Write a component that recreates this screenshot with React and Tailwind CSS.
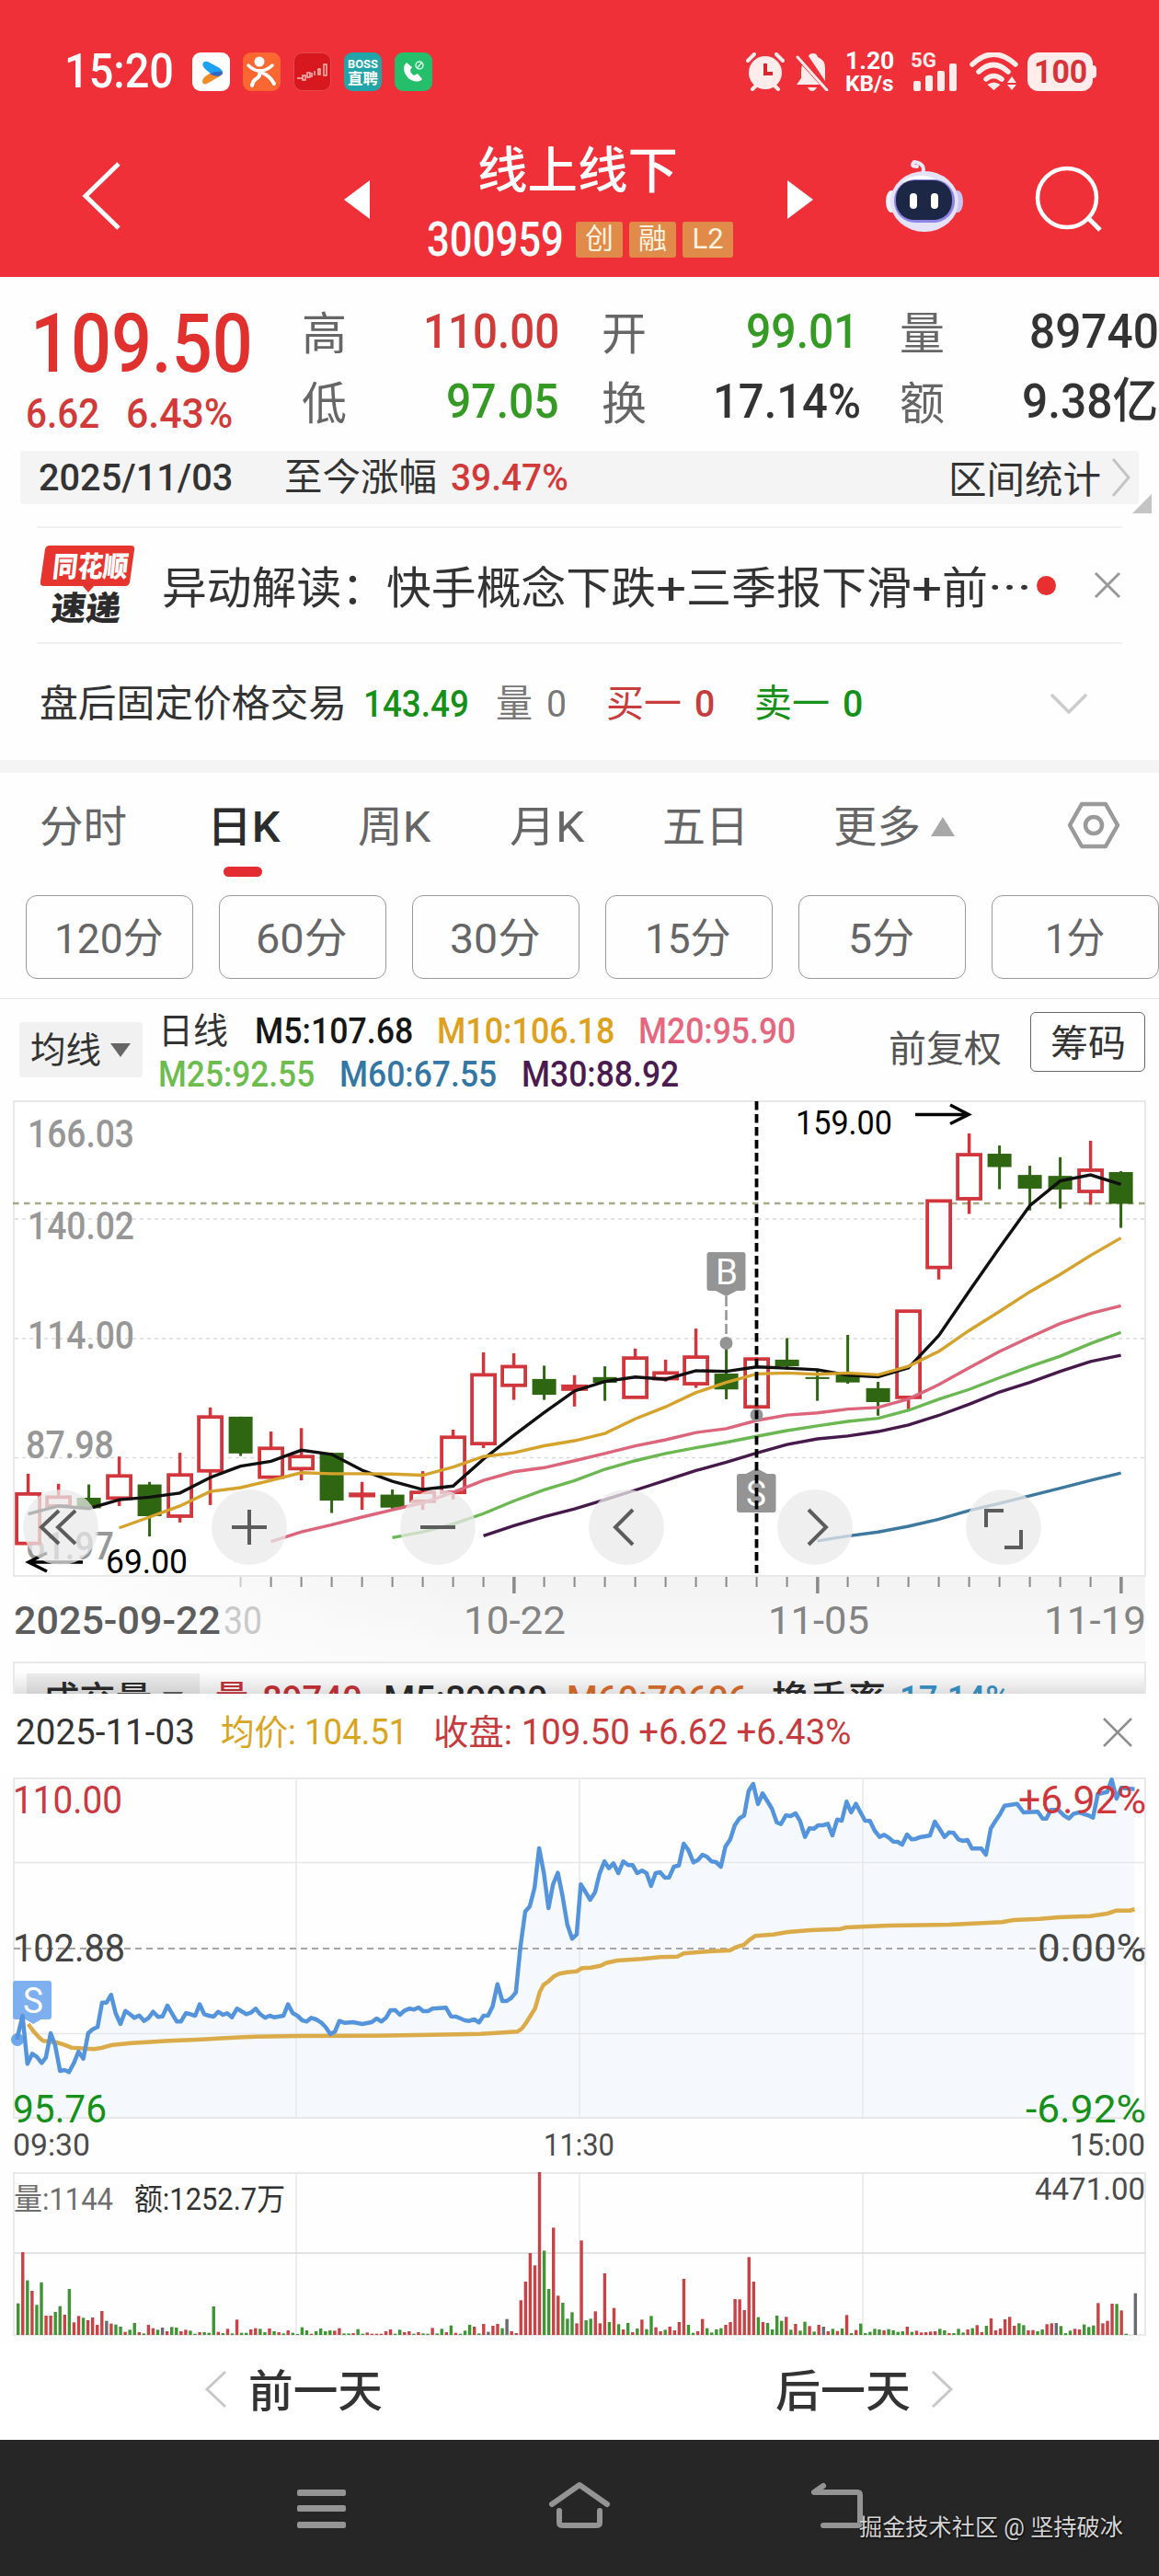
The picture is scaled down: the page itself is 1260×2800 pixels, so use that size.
import { useLayoutEffect, useRef } from 'react';

// Condenses or widens a line of text so that it fills its box exactly
function Fit({ className, children }) {
  const box = useRef(null);
  const ink = useRef(null);

  useLayoutEffect(() => {
    const ratio = box.current.clientWidth / ink.current.offsetWidth;
    ink.current.style.transform = `scaleX(${ratio})`;
  }, [children]);

  return (
    <span ref={box} className={`block shrink-0 leading-none ${className}`}>
      <span ref={ink} className="block w-max origin-left whitespace-pre">{children}</span>
    </span>
  );
}

// Text inside a chart, stretched to the given width
function Label({ x, y, w, size, fill, weight = 400, children }) {
  return (
    <text
      x={x}
      y={y + size * 0.355}
      fontSize={size}
      fill={fill}
      fontWeight={weight}
      textLength={w}
      lengthAdjust="spacingAndGlyphs"
    >
      {children}
    </text>
  );
}

/* ---------- daily K data, in chart units ---------- */

const UNIT = 2.904;
const kx = (i) => 30.6 + 33 * i;
const ky = (v) => v / UNIT;

// [up/down, high, body top, body bottom, low]
const candles = [
  ['r', 1196, 1260, 1416, 1418], ['r', 1228, 1270, 1298, 1300], ['g', 1230, 1272, 1305, 1305],
  ['r', 1142, 1203, 1273, 1298], ['g', 1222, 1230, 1330, 1394], ['r', 1130, 1200, 1330, 1350],
  ['r', 987, 1017, 1187, 1295], ['g', 1016, 1016, 1132, 1140], ['r', 1063, 1116, 1207, 1207],
  ['r', 1052, 1142, 1180, 1217], ['g', 1130, 1130, 1281, 1320], ['r', 1222, 1261, 1265, 1310],
  ['g', 1246, 1262, 1303, 1308], ['r', 1188, 1255, 1283, 1310], ['r', 1057, 1081, 1255, 1277],
  ['r', 813, 884, 1101, 1115], ['r', 816, 858, 917, 963], ['g', 855, 897, 947, 963],
  ['r', 885, 920, 929, 984], ['g', 857, 891, 909, 966], ['r', 801, 831, 955, 955],
  ['r', 836, 878, 896, 905], ['r', 738, 828, 912, 925], ['g', 785, 880, 930, 961],
  ['r', 828, 834, 985, 985], ['g', 768, 836, 857, 868], ['g', 865, 891, 897, 966],
  ['g', 758, 880, 908, 912], ['g', 906, 926, 970, 1013], ['r', 680, 683, 955, 995],
  ['r', 332, 335, 545, 583], ['r', 122, 189, 328, 376], ['g', 160, 186, 228, 298],
  ['g', 224, 253, 296, 365], ['g', 197, 256, 299, 359], ['r', 145, 238, 305, 347],
  ['g', 241, 244, 344, 420],
];

const averages = [
  { color: '#3d789f', start: 26, values: [1408, 1393, 1380, 1362, 1340, 1312, 1290, 1266, 1242, 1217, 1194] },
  { color: '#451a4a', start: 15, values: [1392, 1360, 1332, 1307, 1278, 1248, 1217, 1186, 1160, 1131, 1104, 1086, 1077, 1063, 1042, 1012, 977, 938, 908, 873, 842, 822] },
  { color: '#6bb751', start: 12, values: [1398, 1380, 1355, 1322, 1282, 1247, 1218, 1182, 1155, 1132, 1114, 1097, 1078, 1060, 1045, 1031, 1021, 996, 961, 930, 893, 858, 825, 785, 750] },
  { color: '#dc647b', start: 8, values: [1410, 1380, 1357, 1333, 1310, 1288, 1255, 1217, 1190, 1177, 1155, 1132, 1108, 1089, 1066, 1054, 1028, 1011, 1004, 992, 987, 960, 915, 862, 810, 765, 722, 690, 666] },
  { color: '#101010', start: 0, values: [1323, 1298, 1306, 1278, 1270, 1257, 1208, 1172, 1157, 1122, 1135, 1185, 1220, 1246, 1235, 1150, 1075, 1003, 935, 905, 891, 898, 871, 873, 859, 863, 868, 885, 890, 862, 760, 620, 483, 350, 272, 253, 283] },
  { color: '#d5a22b', start: 3, values: [1367, 1333, 1298, 1252, 1240, 1217, 1193, 1196, 1196, 1197, 1201, 1175, 1142, 1130, 1108, 1092, 1069, 1023, 985, 940, 908, 881, 878, 882, 878, 884, 857, 810, 744, 684, 622, 567, 507, 452] },
];

/* ---------- intraday data ---------- */

const price = `45,920 60,843 73,1000 86,967 98,977 111,997 122,980 135,900 147,940 160,1023 172,1020 184,1027
197,997 209,960 222,983 235,900 247,887 260,880 272,800 284,800 296,775 308,835 321,870 334,827 346,838
358,850 371,842 384,860 396,850 408,830 421,847 433,845 446,810 458,835 471,862 482,862 495,835 507,838
520,843 532,806 544,838 557,843 569,846 581,830 594,840 605,835 618,848 631,820 643,828 656,838 668,833
681,820 693,838 706,850 718,843 730,848 755,843 767,806 780,835 792,843 805,858 817,862 829,850 842,855
855,865 867,880 880,903 892,895 904,860 917,866 940,864 965,870 990,864 1003,852 1016,862 1028,850
1040,825 1053,825 1065,840 1078,826 1090,820 1103,823 1115,816 1127,828 1140,828 1152,820 1188,817
1201,845 1215,846 1238,858 1250,860 1263,855 1276,865 1288,843 1300,842 1312,813 1325,740 1338,795
1350,795 1362,785 1374,767 1386,620 1399,503 1411,487 1424,425 1436,297 1449,380 1461,492 1473,415
1486,377 1498,450 1511,545 1524,592 1536,578 1547,415 1560,440 1572,465 1585,440 1597,380 1610,340
1622,362 1634,346 1647,378 1660,340 1673,352 1685,352 1697,378 1710,370 1722,378 1734,420 1746,378
1758,375 1771,393 1782,392 1795,357 1808,353 1821,282 1833,302 1847,343 1859,335 1871,318 1883,325
1895,340 1907,342 1920,357 1932,292 1945,268 1957,222 1969,200 1982,190 1994,110 2006,87 2019,153
2031,118 2043,142 2056,168 2069,213 2080,218 2093,190 2106,192 2119,183 2131,208 2144,260 2156,232
2168,233 2179,222 2192,222 2205,217 2217,255 2230,203 2242,207 2255,145 2267,180 2280,152 2292,180
2304,207 2317,208 2330,240 2343,260 2355,253 2367,262 2379,275 2391,276 2403,285 2416,252 2428,268
2440,266 2453,260 2465,258 2477,255 2490,210 2503,235 2516,260 2528,245 2540,247 2553,268 2565,273
2577,270 2589,298 2614,298 2626,318 2639,233 2652,207 2664,185 2676,158 2709,152 2726,180 2764,178
2777,200 2787,200 2799,172 2819,172 2834,190 2847,200 2859,185 2874,180 2899,190 2911,197 2924,120
2949,113 2961,73 2974,135 2986,100 3022,104`;

const avgPrice = `75,870 90,895 105,915 115,925 150,930 172,938 190,947 250,952 270,948 300,938 350,932 450,925
540,920 600,916 680,911 800,909 1000,908 1150,905 1280,902 1350,897 1378,895 1390,885 1402,865 1425,820
1438,765 1448,742 1460,732 1475,715 1490,706 1510,701 1536,698 1550,688 1574,686 1599,680 1614,671
1644,663 1709,658 1759,652 1804,650 1821,640 1889,633 1944,630 1959,620 1981,612 1997,595 2011,583
2059,578 2099,570 2159,564 2239,560 2254,555 2309,552 2369,549 2529,546 2669,538 2699,531 2769,527
2819,522 2904,518 2949,510 2974,500 3009,500 3022,496`;

const volumes = `g103 r270 g178 r144 g98 g171 r63 r63 g75 g94 r66 g150 r41 r62 g56 r48 r57 r33 r78 k46 r37 g34
g27 r10 g17 g39 r9 g5 r33 r22 g17 k24 r12 g26 g24 r12 r17 g14 g4 r9 g9 g7 g93 r10 g6 r20 g5 r50 g7 g7 r18
r22 g20 g9 r21 g12 r9 g5 r15 g7 g3 g25 g15 r4 g12 g21 g12 g15 r14 r22 g5 g5 r6 g19 g4 r8 r4 r4 r4 r12 r18
g4 g17 r9 r12 g4 r9 g5 g4 r23 g5 g20 r9 g31 r7 g4 g14 g33 r27 g5 r36 k10 r30 r36 g22 k52 r12 r6 r113 r174
r267 r227 r531 g275 g150 r350 r128 g105 g53 g74 r38 r308 g48 g53 r77 r38 r201 g42 r88 g35 r18 g39 r9 g21
r50 g19 g62 r25 r12 g17 r27 r15 r42 r183 g33 g7 r12 r52 g22 g8 g18 g22 r33 r42 r117 r116 r81 r254 r174 g58
r42 g39 g18 g63 g46 r59 g17 r36 g14 g43 r29 g11 r33 k27 r12 g20 r13 g21 r65 g6 r16 g37 g6 g10 g20 g18 r15
g19 g15 g10 g12 r27 g10 r14 r8 r9 r11 r12 g20 g15 r6 g6 g20 g8 r18 g22 r32 r9 g30 r54 r15 r21 r51 r59 r30
g38 g32 r15 r16 g12 g18 r35 r38 k39 g29 g6 g14 r20 r18 g34 g26 g31 r104 r38 r46 r102 g101 r80 g4 k0 k136`.split(/\s+/);

const barColors = { r: '#c74347', g: '#3f9434', k: '#6b6b70' };

const toPoints = (data) =>
  data
    .split(/\s+/)
    .map((pair) => {
      const [x, y] = pair.split(',').map(Number);
      return `${(x / 2.45).toFixed(1)},${(y / 3 - 15).toFixed(1)}`;
    })
    .join(' ');

const periods = [
  { label: '120分', cls: 'w-[119px]' },
  { label: '60分', cls: 'w-[100px]' },
  { label: '30分', cls: 'w-[99px]' },
  { label: '15分', cls: 'w-[94px]' },
  { label: '5分', cls: 'w-[72px]' },
  { label: '1分', cls: 'w-[65px]' },
];

function StatusBar() {
  return (
    <div className="flex h-[156px] items-center pl-[70px] text-white">
      <Fit className="w-[119px] text-[52px] font-medium">15:20</Fit>
      <div className="ml-5 flex gap-[14px]">
        <svg width="41" height="42" viewBox="0 0 41 42">
          <rect width="41" height="42" rx="9" fill="#fff" />
          <path d="M12 11q2-2 5-1l11 6q6 3 5 8-8 3-13-1l-6-5q-4-4-2-7z" fill="#1ea1f5" />
          <path d="M33 21q0 4-5 6l-12 7q-5 2-5-3 1-5 8-8 7-1 14-2z" fill="#f58b2a" />
          <path d="M33 21q0 3-5 5-5 0-9-3 7-3 14-2z" fill="#2f67c9" />
        </svg>
        <svg width="41" height="42" viewBox="0 0 41 42">
          <rect width="41" height="42" rx="9" fill="#fb6730" />
          <circle cx="18" cy="10" r="5.5" fill="#fff" />
          <path d="M6 14q6 6 12 6 8 0 14-6" stroke="#fff" strokeWidth="3.5" fill="none" strokeLinecap="round" />
          <path d="M18 20q2 6-4 9-3 2-4 7M21 22q9 4 13 12" stroke="#fff" strokeWidth="4" fill="none" strokeLinecap="round" />
        </svg>
        <svg width="41" height="42" viewBox="0 0 41 42">
          <rect x="0.5" y="0.5" width="40" height="41" rx="9" fill="#d8181f" stroke="#e64a4e" />
          <path d="M4 28h6M10 25v5h3v-5zM15 22v5h3v-5zM20 22v5M23 20v5M27 18h2v6h-2zM33 13v12h3V13z" stroke="#f7b9b4" strokeWidth="1.5" fill="none" />
        </svg>
        <svg width="41" height="42" viewBox="0 0 41 42">
          <rect width="41" height="42" rx="9" fill="#22a5a9" />
          <text x="4" y="17" fontSize="13" fontWeight="700" fill="#fff" textLength="33" lengthAdjust="spacingAndGlyphs">BOSS</text>
          <text x="4" y="34" fontSize="16" fontWeight="700" fill="#fff" textLength="33" lengthAdjust="spacingAndGlyphs">直聘</text>
        </svg>
        <svg width="41" height="42" viewBox="0 0 41 42">
          <rect width="41" height="42" rx="9" fill="#25bf6b" />
          <path d="M13 11c-5 4-3 12 2 17 5 4 11 5 15 1l-5-6-4 2c-2-1-4-4-4-6l2-3z" fill="#fff" />
          <circle cx="27" cy="14" r="4" fill="none" stroke="#d9fbe6" strokeWidth="1.5" />
          <path d="M24.5 17l5-6" stroke="#d9fbe6" strokeWidth="1.5" />
        </svg>
      </div>
      <div className="ml-[341px] flex items-center">
        <svg width="42" height="42" viewBox="0 0 42 42">
          <circle cx="21" cy="22" r="18" fill="#ffeceb" />
          <path d="M2 9l7-7M40 9l-7-7M7 40l5-5M35 40l-5-5" stroke="#ffeceb" strokeWidth="4" strokeLinecap="round" />
          <path d="M21 12v11h8" stroke="#d9262d" strokeWidth="4" fill="none" />
        </svg>
        <svg className="ml-[11px]" width="40" height="42" viewBox="0 0 40 42">
          <path d="M20 1q-4 0-5 3L33 31V17q0-9-8-12-1-4-5-4zM8 14q-1 3-1 7v7l-5 7h25z" fill="#ffeceb" />
          <path d="M3 5l32 36" stroke="#ffeceb" strokeWidth="3" strokeLinecap="round" />
          <path d="M14 38h10q-2 4-5 4t-5-4z" fill="#ffeceb" />
        </svg>
        <div className="ml-[15px] flex flex-col gap-px text-[25px] font-bold">
          <Fit className="w-[53px]">1.20</Fit>
          <Fit className="w-[53px] text-[23px]">KB/s</Fit>
        </div>
        <svg className="ml-[18px]" width="52" height="42" viewBox="0 0 52 42">
          <text x="0" y="16" fontSize="22" fontWeight="700" fill="#ffeceb" textLength="28" lengthAdjust="spacingAndGlyphs">5G</text>
          <g fill="#ffeceb">
            <rect x="3" y="31" width="8" height="11" rx="2" />
            <rect x="16" y="25" width="8" height="17" rx="2" />
            <rect x="29" y="20" width="8" height="22" rx="2" />
            <rect x="42" y="12" width="8" height="30" rx="2" />
          </g>
        </svg>
        <svg className="ml-[12px]" width="54" height="42" viewBox="0 0 54 42">
          <path d="M3 13q23-22 47 0M10 21q16-15 32 0M18 29q8-7 17 0" stroke="#ffeceb" strokeWidth="5.5" fill="none" strokeLinecap="round" />
          <path d="M26.5 41l-7-6q7-5 14 0z" fill="#ffeceb" />
          <path d="M46 26l5 7H41zM46 41l5-6H41z" fill="#ffeceb" />
        </svg>
        <div className="relative ml-[9px] flex h-[42px] w-[71px] items-center justify-center rounded-xl bg-[#ffeceb] text-[#d6343a]">
          <Fit className="w-[58px] text-[35px] font-bold">100</Fit>
          <span className="absolute top-[14px] -right-[4px] h-[14px] w-[5px] rounded-r bg-[#ffeceb]" />
        </div>
      </div>
    </div>
  );
}

function TitleBar() {
  return (
    <div className="flex h-[145px] items-start pl-[88px] text-white">
      <svg className="mt-[19px]" width="44" height="76" viewBox="0 0 44 76" fill="none" stroke="#fff" strokeWidth="5">
        <path d="M41 3L5 38l36 35" />
      </svg>
      <svg className="mt-[40px] ml-[242px]" width="28" height="42" viewBox="0 0 28 42"><path d="M28 0v42L0 21z" fill="#fff" /></svg>
      <div className="ml-[62px] w-[332px] pt-1">
        <Fit className="ml-[55px] w-[218px] text-[54px] font-medium">线上线下</Fit>
        <div className="mt-[21px] flex h-[50px] items-center">
          <Fit className="w-[149px] text-[51px] font-medium">300959</Fit>
          <div className="ml-[13px] flex gap-[7px] text-[31px] text-[#fff3e0]">
            <span className="flex h-[39px] w-[51px] items-center justify-center rounded-[3px] bg-[#e08b49]">创</span>
            <span className="flex h-[39px] w-[51px] items-center justify-center rounded-[3px] bg-[#e08b49]">融</span>
            <span className="flex h-[39px] w-[55px] items-center justify-center rounded-[3px] bg-[#e08b49]">L2</span>
          </div>
        </div>
      </div>
      <svg className="mt-[40px] ml-[60px]" width="28" height="42" viewBox="0 0 28 42"><path d="M0 0v42l28-21z" fill="#fff" /></svg>
      <svg className="mt-[18px] ml-[79px]" width="84" height="80" viewBox="0 0 84 80">
        <path d="M40 15q4-11-9-13-5 5 3 5" stroke="#e9e9f7" strokeWidth="4" fill="none" strokeLinecap="round" />
        <ellipse cx="6" cy="45" rx="6" ry="12" fill="#f2f1fb" />
        <ellipse cx="78" cy="45" rx="6" ry="12" fill="#c9c4f3" />
        <ellipse cx="42" cy="45" rx="37" ry="33" fill="#e4e2f6" />
        <ellipse cx="38" cy="27" rx="20" ry="10" fill="#fff" />
        <rect x="9" y="21" width="66" height="47" rx="23" fill="#8c83e8" />
        <rect x="11" y="22" width="61" height="43" rx="20" fill="#1b2744" />
        <rect x="26" y="36" width="8" height="17" rx="4" fill="#fff" />
        <rect x="49" y="36" width="8" height="17" rx="4" fill="#fff" />
      </svg>
      <svg className="mt-[24px] ml-[78px]" width="76" height="76" viewBox="0 0 76 76" fill="none" stroke="#fff" strokeWidth="4.5">
        <circle cx="35" cy="35" r="32" />
        <path d="M58 57l13 13" strokeWidth="5" />
      </svg>
    </div>
  );
}

function Quote() {
  return (
    <div className="flex h-[189px]">
      <div className="w-[328px] shrink-0 pt-[32px] text-[#e0312f]">
        <div className="flex h-20 items-center pl-[33px]">
          <Fit className="w-[242px] text-[89px] font-medium">109.50</Fit>
        </div>
        <div className="mt-[10px] flex h-[52px] items-center pl-[28px] text-[45px] font-medium text-[#d23a3a]">
          <Fit className="w-[80px]">6.62</Fit>
          <Fit className="ml-[29px] w-[116px]">6.43%</Fit>
        </div>
      </div>
      <div className="shrink-0 pt-[30px] text-[52px] font-medium text-[#333]">
        <div className="flex h-[60px] items-center">
          <span className="mt-1 w-[50px] text-[49px] leading-none font-normal text-[#666]">高</span>
          <Fit className="ml-[82px] w-[148px] text-[#d23a3a]">110.00</Fit>
          <span className="mt-1 ml-[46px] w-[50px] text-[49px] leading-none font-normal text-[#666]">开</span>
          <Fit className="ml-[107px] w-[123px] text-[#359a24]">99.01</Fit>
          <span className="mt-1 ml-[44px] w-[50px] text-[49px] leading-none font-normal text-[#666]">量</span>
          <Fit className="ml-[91px] w-[141px]">89740</Fit>
        </div>
        <div className="mt-4 flex h-[60px] items-center">
          <span className="mt-1 w-[50px] text-[49px] leading-none font-normal text-[#666]">低</span>
          <Fit className="ml-[107px] w-[123px] text-[#359a24]">97.05</Fit>
          <span className="mt-1 ml-[46px] w-[50px] text-[49px] leading-none font-normal text-[#666]">换</span>
          <Fit className="ml-[71px] w-[161px]">17.14%</Fit>
          <span className="mt-1 ml-[42px] w-[50px] text-[49px] leading-none font-normal text-[#666]">额</span>
          <Fit className="ml-[83px] w-[148px]">9.38亿</Fit>
        </div>
      </div>
    </div>
  );
}

function RangeBar() {
  return (
    <div className="relative mx-[22px] flex h-[58px] items-center rounded bg-[#f4f4f4] text-[41px] text-[#333]">
      <Fit className="ml-[20px] w-[211px] font-medium">2025/11/03</Fit>
      <Fit className="mt-px ml-[56px] w-[166px]">至今涨幅</Fit>
      <Fit className="ml-[15px] w-[128px] font-medium text-[#d23a3a]">39.47%</Fit>
      <Fit className="mt-[6px] ml-[413px] w-[166px]">区间统计</Fit>
      <svg className="ml-[11px]" width="22" height="44" viewBox="0 0 22 44" fill="none" stroke="#c4c4c4" strokeWidth="3">
        <path d="M2 2l17 20L2 42" />
      </svg>
      <svg className="absolute -right-[14px] -bottom-[10px]" width="21" height="21" viewBox="0 0 21 21"><path d="M21 0v21H0z" fill="#c4c4c4" /></svg>
    </div>
  );
}

function NewsRow() {
  return (
    <div className="mx-[40px] mt-[24px] flex h-[128px] items-center border-y-2 border-[#f0f0f0]">
      <svg className="ml-1 shrink-0" width="104" height="88" viewBox="0 0 104 88">
        <path d="M10 1h88q5 0 4 5l-5 35q-1 4-5 4H58l-6 7-6-7H4q-5 0-4-5L5 5q1-4 5-4z" fill="#e6352f" />
        <g transform="skewX(-6)">
          <text x="16" y="35" fontSize="31" fontWeight="900" fill="#fff" textLength="82" lengthAdjust="spacingAndGlyphs">同花顺</text>
          <text x="19" y="82" fontSize="36" fontWeight="900" fill="#2c2c2c" textLength="76" lengthAdjust="spacingAndGlyphs">速递</text>
        </g>
      </svg>
      <div className="mt-[7px] ml-[28px] flex shrink-0 text-[48px] text-[#333]">
        <Fit className="w-[244px]">异动解读：</Fit>
        <Fit className="w-[293px]">快手概念下跌</Fit>
        <Fit className="w-[33px]">+</Fit>
        <Fit className="w-[245px]">三季报下滑</Fit>
        <Fit className="w-[33px]">+</Fit>
        <Fit className="w-[50px]">前</Fit>
        <Fit className="w-[48px]">···</Fit>
      </div>
      <span className="ml-[5px] size-[21px] shrink-0 rounded-full bg-[#e7302f]" />
      <svg className="ml-[41px] shrink-0" width="30" height="30" viewBox="0 0 30 30" stroke="#999" strokeWidth="3">
        <path d="M2 2l26 26M28 2L2 28" />
      </svg>
    </div>
  );
}

function FixedPriceRow() {
  return (
    <div className="flex h-[126px] items-center pt-1 pl-[43px] text-[41px] text-[#333]">
      <Fit className="w-[334px]">盘后固定价格交易</Fit>
      <Fit className="ml-[18px] w-[115px] font-medium text-[#159018]">143.49</Fit>
      <Fit className="ml-[29px] w-[40px] text-[#777]">量</Fit>
      <Fit className="ml-[15px] w-[22px] text-[#777]">0</Fit>
      <Fit className="ml-[43px] w-[82px] text-[#c93c3c]">买一</Fit>
      <Fit className="ml-[14px] w-[22px] font-medium text-[#c93c3c]">0</Fit>
      <Fit className="ml-[43px] w-[82px] text-[#159018]">卖一</Fit>
      <Fit className="ml-[14px] w-[22px] font-medium text-[#159018]">0</Fit>
      <svg className="ml-[203px]" width="42" height="26" viewBox="0 0 42 26" fill="none" stroke="#ccc" strokeWidth="3.5">
        <path d="M2 3l19 19L40 3" />
      </svg>
    </div>
  );
}

function Tabs() {
  return (
    <>
      <div className="flex h-[116px] items-center pl-[43px] text-[47px] text-[#666]">
        <Fit className="w-[95px]">分时</Fit>
        <div className="relative ml-[87px] text-[#2c2c2c]">
          <Fit className="w-[80px] font-medium">日K</Fit>
          <span className="absolute top-[67px] left-[18px] h-[11px] w-[42px] rounded-full bg-[#e42d31]" />
        </div>
        <Fit className="ml-[84px] w-[80px]">周K</Fit>
        <Fit className="ml-[85px] w-[82px]">月K</Fit>
        <Fit className="ml-[84px] w-[94px]">五日</Fit>
        <Fit className="ml-[92px] w-[95px]">更多</Fit>
        <svg className="ml-[11px]" width="26" height="21" viewBox="0 0 26 21"><path d="M13 0l13 21H0z" fill="#a8a8a8" /></svg>
        <svg className="ml-[122px]" width="58" height="54" viewBox="0 0 58 54" fill="none" stroke="#9a9a9a" strokeWidth="4.5" strokeLinejoin="round">
          <path d="M16 3h26l13 23-13 23H16L3 26z" />
          <circle cx="29" cy="26" r="9" />
        </svg>
      </div>
      <div className="mt-[17px] flex gap-[28px] pl-[28px] text-[45px] text-[#666]">
        {periods.map((period) => (
          <button key={period.label} className="flex h-[91px] w-[182px] shrink-0 items-center justify-center rounded-xl border-[1.5px] border-[#999] pr-[2px]">
            <Fit className={`mt-1 ${period.cls}`}>{period.label}</Fit>
          </button>
        ))}
      </div>
      <div className="mt-[21px] h-px bg-[#e4e4e4]" />
    </>
  );
}

function Indicators() {
  return (
    <div className="flex h-[104px] items-start pl-[21px] text-[39px] text-[#333]">
      <div className="mt-[25px] flex h-[60px] w-[134px] items-center rounded bg-[#f1f1f1] pl-[12px]">
        <Fit className="mt-[2px] w-[77px]">均线</Fit>
        <svg className="ml-[10px]" width="22" height="15" viewBox="0 0 22 15"><path d="M0 0h22L11 15z" fill="#666" /></svg>
      </div>
      <div className="ml-[17px] w-[695px] pt-[15px] font-medium">
        <div className="flex h-10 items-center">
          <Fit className="w-[76px] font-normal">日线</Fit>
          <Fit className="ml-[29px] w-[172px] text-[#161616]">M5:107.68</Fit>
          <Fit className="ml-[26px] w-[193px] text-[#dda11e]">M10:106.18</Fit>
          <Fit className="ml-[26px] w-[171px] text-[#e4677f]">M20:95.90</Fit>
        </div>
        <div className="mt-[7px] flex h-10 items-center">
          <Fit className="w-[170px] text-[#6cbd4e]">M25:92.55</Fit>
          <Fit className="ml-[27px] w-[171px] text-[#3476a4]">M60:67.55</Fit>
          <Fit className="ml-[27px] w-[171px] text-[#4b1b50]">M30:88.92</Fit>
        </div>
      </div>
      <Fit className="mt-[35px] ml-[99px] w-[123px] text-[40px] text-[#555]">前复权</Fit>
      <button className="mt-[14px] ml-[31px] flex h-[65px] w-[125px] items-center justify-center rounded-md border-[1.5px] border-[#666]">
        <Fit className="mt-1 w-[82px] text-[40px]">筹码</Fit>
      </button>
    </div>
  );
}

function DailyChart() {
  return (
    <div className="relative h-[616px]">
      <svg width="1260" height="616" viewBox="0 0 1260 616">
        <defs>
          <linearGradient id="axis" x1="0" x2="0" y1="0" y2="1">
            <stop offset="0" stopColor="#f3f3f3" />
            <stop offset="1" stopColor="#fafafa" />
          </linearGradient>
          <linearGradient id="axisFade" x1="0" x2="1" y1="0" y2="0">
            <stop offset="0" stopColor="#fefefe" />
            <stop offset="0.4" stopColor="#fefefe" stopOpacity="0" />
          </linearGradient>
        </defs>
        <rect x="15" y="523" width="1230" height="93" fill="url(#axis)" />
        <rect x="15" y="523" width="1230" height="93" fill="url(#axisFade)" />
        <rect x="15" y="7" width="1230" height="516" fill="#fff" stroke="#e8e8e8" strokeWidth="2" />
        <path d="M16 135h1229M16 265h1229M16 394.500h1229" stroke="#dadada" strokeWidth="1.5" strokeDasharray="4 4" />
        <path d="M14 118h1231" stroke="#a6a988" strokeWidth="2.5" strokeDasharray="6.5 5.5" />

        <Label x={30} y={42} w={116} size={42} fill="#979797" weight={500}>166.03</Label>
        <Label x={30} y={142} w={116} size={42} fill="#979797" weight={500}>140.02</Label>
        <Label x={30} y={261} w={116} size={42} fill="#979797" weight={500}>114.00</Label>
        <Label x={28} y={380} w={96} size={42} fill="#979797" weight={500}>87.98</Label>
        <Label x={28} y={490} w={96} size={42} fill="#979797" weight={500}>61.97</Label>

        {candles.map(([kind, high, top, bottom, low], i) => {
          const x = kx(i);
          if (kind === 'g') {
            return (
              <g key={i} fill="#2f6612">
                <rect x={x - 1.5} y={ky(high)} width="3" height={ky(low - high)} />
                <rect x={x - 13} y={ky(top)} width="26" height={ky(bottom - top)} />
              </g>
            );
          }
          return (
            <g key={i} fill="#fff" stroke="#d0363b">
              <path d={`M${x} ${ky(high)}V${ky(low)}`} strokeWidth="3.5" />
              <rect x={x - 12.5} y={ky(top)} width="25" height={ky(bottom - top)} strokeWidth="3.8" />
            </g>
          );
        })}

        {averages.map((line) => (
          <polyline
            key={line.color}
            points={line.values.map((v, i) => `${kx(line.start + i)},${ky(v)}`).join(' ')}
            fill="none"
            stroke={line.color}
            strokeWidth="3.4"
          />
        ))}

        {/* trade markers */}
        <g fill="#949494">
          <rect x="768.500" y="171" width="42" height="42" rx="3" />
          <path d="M778 213h23l-11.500 6z" />
          <path d="M789.500 219v50" stroke="#949494" strokeWidth="2.5" strokeDasharray="11 4" />
          <circle cx="789.500" cy="270" r="7" />
          <rect x="801" y="412" width="42.500" height="42" rx="3" />
          <path d="M811 412h23l-11.500-6z" />
          <circle cx="822.500" cy="348" r="7" />
        </g>
        <Label x={778} y={193} w={24} size={38} fill="#fff">B</Label>
        <Label x={811} y={434} w={22} size={38} fill="#fff">S</Label>
        <path d="M822.500 7v513" stroke="#000" strokeWidth="3.8" strokeDasharray="9.5 4.5" />

        <Label x={865} y={30} w={105} size={37} fill="#000">159.00</Label>
        <path d="M995 21.500h56M1033 11l20 10.500-20 10" stroke="#000" strokeWidth="3.5" fill="none" />
        <Label x={115} y={507} w={89} size={37} fill="#000">69.00</Label>
        <path d="M90 508H32M51 498l-20 10 20 10" stroke="#000" strokeWidth="3.5" fill="none" />

        {Array.from({ length: 30 }, (_, i) => i + 7).map((i) => (
          <rect
            key={i}
            x={kx(i) - (i % 10 === 6 ? 1.5 : 1)}
            y="524"
            width={i % 10 === 6 ? 3.5 : 2}
            height={i % 10 === 6 ? 18 : 11}
            fill={i === 7 ? '#ccc' : '#8a8a8a'}
          />
        ))}

        <Label x={15} y={571} w={225} size={42} fill="#5d5d5d" weight={500}>2025-09-22</Label>
        <Label x={243} y={571} w={42} size={42} fill="#c9c9c9">30</Label>
        <Label x={504} y={571} w={111} size={42} fill="#848484">10-22</Label>
        <Label x={835} y={571} w={110} size={42} fill="#848484">11-05</Label>
        <Label x={1135} y={571} w={111} size={42} fill="#848484">11-19</Label>
      </svg>

      <div className="absolute top-[429px] left-[25px] flex gap-[123px]">
        {[
          'M39 23L20 41l19 18M57 23L38 41l19 18',
          'M41 22v38M22 41h38',
          'M22 41h38',
          'M48 22L29 41l19 19',
          'M34 22l19 19-19 19',
          'M22 41V23h19M42 63h18V44',
        ].map((d) => (
          <button key={d} className="size-[82px] rounded-full bg-[#e9e9ea]/75">
            <svg width="82" height="82" viewBox="0 0 82 82" fill="none" stroke="#5c5c5c" strokeWidth="4">
              <path d={d} />
            </svg>
          </button>
        ))}
      </div>
    </div>
  );
}

// Top edge of the volume pane; the day panel below covers the rest
function VolumeStrip() {
  return (
    <div className="relative mx-[14px] flex h-[35px] items-start overflow-hidden border-2 border-b-0 border-[#e8e8e8] pl-[13px] text-[39px] font-medium text-[#2c2c2c]">
      <div className="mt-[11px] flex h-[60px] w-[188px] shrink-0 items-start bg-[#ededed] pt-[10px] pl-[18px]">
        <Fit className="w-[118px]">成交量</Fit>
        <svg className="mt-[10px] ml-[12px]" width="22" height="15" viewBox="0 0 22 15"><path d="M0 0h22L11 15z" fill="#666" /></svg>
      </div>
      <div className="flex shrink-0 pt-[20px]">
        <Fit className="ml-[17px] w-[36px] text-[#c93238]">量</Fit>
        <Fit className="ml-[15px] w-[109px] text-[#c93238]">89740</Fit>
        <Fit className="ml-[23px] w-[178px]">M5:89980</Fit>
        <Fit className="ml-[21px] w-[198px] text-[#e0702f]">M60:79606</Fit>
        <Fit className="ml-[25px] w-[124px]">换手率</Fit>
        <Fit className="ml-[15px] w-[120px] text-[#3a97cf]">17.14%</Fit>
      </div>
      <div className="absolute inset-x-0 bottom-0 h-[24px] bg-linear-to-b from-black/0 to-black/12" />
    </div>
  );
}

function DayPanelHeader() {
  return (
    <div className="flex h-[84px] items-center bg-white pl-[17px] text-[38px] text-[#333]">
      <Fit className="w-[195px]">2025-11-03</Fit>
      <Fit className="ml-[28px] w-[203px] text-[#d9a520]">均价: 104.51</Fit>
      <Fit className="ml-[28px] w-[454px] text-[#c63a3d]">收盘: 109.50 +6.62 +6.43%</Fit>
      <svg className="ml-[273px]" width="34" height="34" viewBox="0 0 34 34" stroke="#8f8f8f" strokeWidth="2.5">
        <path d="M2 2l30 30M32 2L2 32" />
      </svg>
    </div>
  );
}

function IntradayChart() {
  const line = toPoints(price);
  return (
    <svg className="block" width="1260" height="625" viewBox="0 0 1260 625">
      <g fill="none" stroke="#e9e9e9" strokeWidth="2">
        <rect x="15" y="8" width="1230" height="369" />
        <rect x="15" y="437" width="1230" height="176" />
      </g>
      <polygon points={`${line} 1233.500,376 16,376 16,290`} fill="#f5f8fd" />
      <g stroke="#e6e7e9" strokeWidth="1.5">
        <path d="M16 99.500h1229M16 285.500h1229M16 377h1229M322 8v369M630 8v369M938 8v369" />
        <path d="M322 437v176M630 437v176M938 437v176" />
        <path d="M16 524h1229" stroke="#d6dad6" />
      </g>
      <path d="M15 193h1230" stroke="#a5a5a5" strokeWidth="2" strokeDasharray="7 5" />

      <rect x="14" y="228" width="42" height="42" rx="3" fill="#7eb0ef" />
      <path d="M28 270h17l-9 5z" fill="#7eb0ef" />
      <Label x={25} y={250} w={22} size={38} fill="#fff">S</Label>
      <circle cx="19" cy="292" r="7" fill="#6ea6ec" />

      <polyline points={toPoints(avgPrice)} fill="none" stroke="#dbab49" strokeWidth="4.5" strokeLinejoin="round" />
      <polyline points={line} fill="none" stroke="#5494dd" strokeWidth="4.5" strokeLinejoin="round" />

      <Label x={14} y={31} w={119} size={42} fill="#c9393d">110.00</Label>
      <Label x={14} y={192} w={122} size={42} fill="#444">102.88</Label>
      <Label x={14} y={367} w={102} size={42} fill="#159018">95.76</Label>
      <Label x={1107} y={31} w={139} size={42} fill="#d0353a">+6.92%</Label>
      <Label x={1128} y={192} w={118} size={42} fill="#444">0.00%</Label>
      <Label x={1115} y={367} w={131} size={42} fill="#159018">-6.92%</Label>

      <Label x={14} y={406} w={84} size={34} fill="#4c4c4c">09:30</Label>
      <Label x={591} y={406} w={77} size={34} fill="#4c4c4c">11:30</Label>
      <Label x={1163} y={406} w={82} size={34} fill="#4c4c4c">15:00</Label>

      {volumes.map((bar, i) => {
        const height = Number(bar.slice(1)) / 3;
        return <rect key={i} x={18 + i * 5.061} y={613 - height} width="3.4" height={height} fill={barColors[bar[0]]} />;
      })}

      <Label x={15} y={465} w={108} size={33} fill="#6e6e6e">量:1144</Label>
      <Label x={146} y={465} w={164} size={33} fill="#333">额:1252.7万</Label>
      <Label x={1125} y={454} w={120} size={34} fill="#4c4c4c">4471.00</Label>
    </svg>
  );
}

function DayPager() {
  return (
    <div className="flex h-[102px] items-center bg-white pb-[8px] pl-[222px] text-[48px] text-[#333]">
      <svg width="25" height="42" viewBox="0 0 25 42" fill="none" stroke="#c8c8c8" strokeWidth="3"><path d="M23 2L3 21l20 19" /></svg>
      <Fit className="mt-[5px] ml-[23px] w-[146px] font-medium">前一天</Fit>
      <Fit className="mt-[5px] ml-[427px] w-[147px] font-medium">后一天</Fit>
      <svg className="ml-[22px]" width="25" height="42" viewBox="0 0 25 42" fill="none" stroke="#c8c8c8" strokeWidth="3"><path d="M2 2l20 19L2 40" /></svg>
    </div>
  );
}

function NavBar() {
  return (
    <div className="relative flex h-[148px] items-start bg-[#262626] pt-[44px] pl-[323px]">
      <svg width="54" height="54" viewBox="0 0 54 54" fill="#949494">
        <rect y="10" width="53" height="7" rx="2" />
        <rect y="27" width="53" height="7" rx="2" />
        <rect y="45" width="53" height="7" rx="2" />
      </svg>
      <svg className="ml-[219px]" width="68" height="54" viewBox="0 0 68 54" fill="none" stroke="#949494" strokeWidth="6" strokeLinecap="round" strokeLinejoin="round">
        <path d="M4 26L34 5l30 21" />
        <path d="M12 33v13q0 3 4 3h36q4 0 4-3V33" />
      </svg>
      <svg className="ml-[217px]" width="60" height="54" viewBox="0 0 60 54" fill="none" stroke="#949494" strokeWidth="6" strokeLinecap="round" strokeLinejoin="round">
        <path d="M14 6L4 13h47q3 0 3 3v30q0 3-3 3H14" />
      </svg>
      <div className="absolute top-[83px] left-[934px] text-[#d4d4d4] [text-shadow:1px_1px_2px_#000]">
        <Fit className="w-[287px] text-[25px]">掘金技术社区 @ 坚持破冰</Fit>
      </div>
    </div>
  );
}

export default function App() {
  return (
    <div className="h-[2800px] w-[1260px] overflow-hidden bg-[#fefefe] font-[Roboto,'Noto_Sans_CJK_SC',sans-serif]">
      <header className="bg-[#f03038]">
        <StatusBar />
        <TitleBar />
      </header>
      <Quote />
      <RangeBar />
      <NewsRow />
      <FixedPriceRow />
      <div className="h-[14px] bg-[#f4f4f4]" />
      <Tabs />
      <Indicators />
      <DailyChart />
      <VolumeStrip />
      <DayPanelHeader />
      <IntradayChart />
      <DayPager />
      <NavBar />
    </div>
  );
}
